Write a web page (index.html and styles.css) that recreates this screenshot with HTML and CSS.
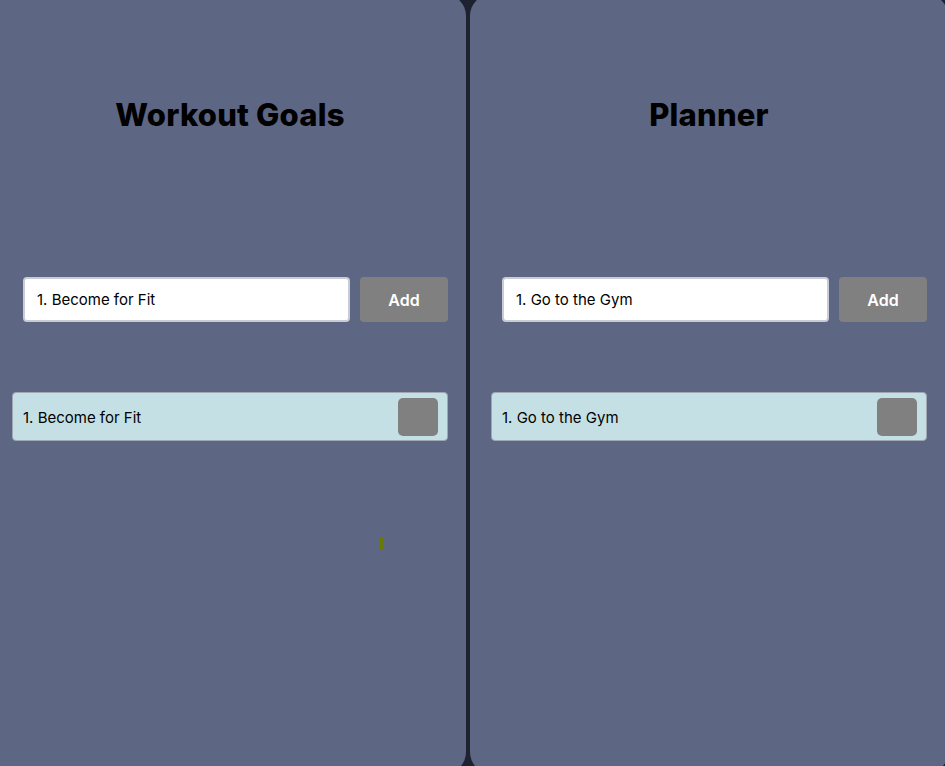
FILE: index.html
```html
<!DOCTYPE html>
<html lang="en">
<head>
<meta charset="utf-8">
<title>Workout Goals &amp; Planner</title>
<link rel="stylesheet" href="styles.css">
</head>
<body>
<main class="board">
  <section class="panel panel-left">
    <h1 class="panel-title">Workout Goals</h1>
    <form class="entry">
      <input class="entry-input" type="text" value="1. Become for Fit">
      <button class="entry-btn" type="button">Add</button>
    </form>
    <ul class="list">
      <li class="item"><span class="item-text">1. Become for Fit</span><span class="item-box"></span></li>
    </ul>
    <span class="mark"></span>
  </section>
  <section class="panel panel-right">
    <h1 class="panel-title">Planner</h1>
    <form class="entry">
      <input class="entry-input" type="text" value="1. Go to the Gym">
      <button class="entry-btn" type="button">Add</button>
    </form>
    <ul class="list">
      <li class="item"><span class="item-text">1. Go to the Gym</span><span class="item-box"></span></li>
    </ul>
  </section>
</main>
</body>
</html>
```
FILE: styles.css
```css
* { box-sizing: border-box; }
html, body {
  margin: 0;
  padding: 0;
  width: 945px;
  height: 766px;
  overflow: hidden;
  background: #1e2130;
  font-family: Inter, "Noto Sans", sans-serif;
}
.board {
  display: flex;
  gap: 4px;
  margin-top: -6px;
  margin-left: -10px;
}
.panel {
  position: relative;
  flex: none;
  height: 780px;
  background: #5d6784;
  border-radius: 22px;
  padding: 0 0 0 22px;
  display: flex;
  flex-direction: column;
  align-items: flex-start;
}
.panel-left { width: 476px; }
.panel-right { width: 478px; padding-left: 21px; }
.panel-title {
  align-self: stretch;
  margin: 103px 18px 0 0;
  text-align: center;
  font-size: 31px;
  line-height: 36px;
  font-weight: 800;
  color: #000;
  letter-spacing: 0.2px;
}
.panel-right .panel-title { margin-right: 21px; }
.entry {
  display: flex;
  gap: 10px;
  margin: 144px 0 0 11px;
}
.entry-input {
  width: 327px;
  height: 45px;
  border: 2px solid #c9ccd4;
  border-radius: 4px;
  background: #fff;
  padding: 0 12px;
  font-family: inherit;
  font-size: 15px;
  color: #000;
  outline: none;
}
.entry-btn {
  width: 88px;
  height: 45px;
  border: none;
  border-radius: 4px;
  background: #808080;
  color: #fff;
  font-family: inherit;
  font-size: 16px;
  font-weight: 600;
}
.list {
  list-style: none;
  margin: 70px 0 0 0;
  padding: 0;
}
.item {
  width: 436px;
  height: 49px;
  display: flex;
  align-items: center;
  justify-content: space-between;
  background: #c5e0e4;
  border: 1px solid #a0a6b4;
  border-radius: 4px;
  padding: 1px 9px 0 10px;
}
.item-text {
  font-size: 15px;
  color: #000;
}
.item-box {
  width: 40px;
  height: 38px;
  border-radius: 5px;
  background: #808080;
}
.mark {
  position: absolute;
  left: 390px;
  top: 544px;
  width: 3px;
  height: 11px;
  background: #6b7a00;
}
```
